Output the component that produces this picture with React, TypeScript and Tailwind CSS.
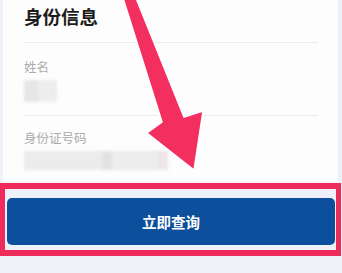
import React from "react";

export default function App() {
  return (
    <div
      className="relative w-[342px] h-[273px] overflow-hidden bg-[#eef1f7]"
      style={{ fontFamily: '"Noto Sans CJK SC", "Noto Sans", sans-serif' }}
    >
      {/* card */}
      <div className="ml-[3px] w-[335px] bg-[#fdfdfd] pl-[21px] pr-[20px] pt-[3px] pb-[12px]">
        <div className="h-[26px] leading-[26px] text-[18.5px] font-bold text-[#1c1c1c]">身份信息</div>
        <div className="mt-[13px] h-px bg-[#ececec]" />
        <div className="mt-[16px] h-[16px] leading-[16px] text-[12.5px] text-[#ababab]">姓名</div>
        <div className="mt-[5px] h-[22px] w-[33px] flex blur-[1.5px]">
          <div className="w-[14px] h-full bg-[#e6e6e6]" />
          <div className="w-[19px] h-full bg-[#ededed]" />
        </div>
        <div className="mt-[13px] h-px bg-[#ececec]" />
        <div className="mt-[14px] h-[16px] leading-[16px] text-[12.5px] text-[#ababab]">身份证号码</div>
        <div className="mt-[5px] h-[19px] w-[144px] flex blur-[1.5px]">
          <div className="w-[78px] h-full bg-[#ececec]" />
          <div className="w-[10px] h-full bg-[#e2e2e2]" />
          <div className="w-[46px] h-full bg-[#ededed]" />
          <div className="w-[10px] h-full bg-[#efe4e8]" />
        </div>
      </div>

      {/* highlighted button area */}
      <div className="mt-px w-[341px] h-[73px] border-x-[5px] border-y-[6px] border-[#ee2b5a] pl-[2px] pr-px pt-[9px] pb-[5px]">
        <button className="w-full h-[47px] rounded-[5px] bg-[#0c4f9d] text-white text-[14.5px] font-bold flex items-center justify-center">
          立即查询
        </button>
      </div>

      {/* arrow overlay */}
      <svg className="absolute left-0 top-0 pointer-events-none" width="342" height="273" viewBox="0 0 342 273">
        <polygon
          points="123,-2 136,-2 184,117 203,111 194,170 147,133 162,122"
          fill="#f22f5e"
          stroke="#ffffff"
          strokeWidth="1.5"
          strokeLinejoin="miter"
        />
      </svg>
    </div>
  );
}
